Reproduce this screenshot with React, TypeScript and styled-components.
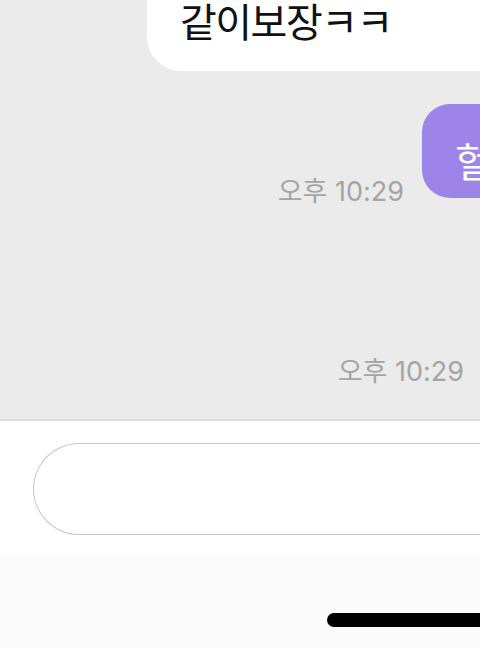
import React from "react";
import styled, { createGlobalStyle } from "styled-components";

const Global = createGlobalStyle`
  html, body { margin: 0; padding: 0; }
  body {
    width: 480px;
    height: 648px;
    overflow: hidden;
    background: #ffffff;
    font-family: Inter, "Noto Sans CJK KR", sans-serif;
  }
`;

const Screen = styled.div`
  width: 480px;
  height: 648px;
  display: flex;
  flex-direction: column;
  overflow: hidden;
`;

const ChatArea = styled.div`
  flex: 0 0 421px;
  box-sizing: border-box;
  background: #ebebeb;
  border-bottom: 2px solid #dcdcdc;
  overflow: hidden;
  display: flex;
  flex-direction: column;
`;

const Row = styled.div<{ $top: number }>`
  display: flex;
  justify-content: flex-end;
  align-items: flex-end;
  gap: 18px;
  margin-top: ${(p) => p.$top}px;
`;

const IncomingBubble = styled.div`
  flex: 1;
  margin-left: 147px;
  height: 71px;
  box-sizing: border-box;
  padding-left: 33px;
  background: #ffffff;
  border-bottom-left-radius: 34px;
  color: #111111;
  font-family: "Noto Sans CJK KR", sans-serif;
  font-size: 40px;
  line-height: 40px;
  letter-spacing: -1.5px;
  white-space: nowrap;
`;

const OutgoingBubble = styled.div`
  flex: 0 0 58px;
  height: 94px;
  box-sizing: border-box;
  padding: 36px 0 0 33px;
  background: #9c84e8;
  border-radius: 28px 0 0 28px;
  color: #ffffff;
  font-family: "Noto Sans CJK KR", sans-serif;
  font-size: 40px;
  line-height: 40px;
  white-space: nowrap;
  overflow: hidden;
`;

const Time = styled.span<{ $drop?: number; $right?: number }>`
  color: #a4a4a4;
  font-size: 27px;
  line-height: 32px;
  white-space: nowrap;
  margin-bottom: ${(p) => -(p.$drop ?? 0)}px;
  margin-right: ${(p) => p.$right ?? 0}px;
`;

const Composer = styled.div`
  flex: 0 0 133px;
  background: #ffffff;
  display: flex;
  align-items: flex-start;
  padding: 22px 0 0 33px;
  box-sizing: border-box;
`;

const InputPill = styled.div`
  flex: 1;
  height: 92px;
  box-sizing: border-box;
  border: 1.5px solid #c6c6c6;
  border-right: none;
  border-radius: 46px 0 0 46px;
  margin-right: -10px;
  background: #ffffff;
`;

const HomeArea = styled.div`
  flex: 1;
  background: #fbfbfb;
  display: flex;
  justify-content: flex-end;
  padding-top: 59px;
  box-sizing: border-box;
`;

const HomeBar = styled.div`
  width: 170px;
  height: 14px;
  margin-right: -17px;
  border-radius: 7px;
  background: #000000;
`;

export default function App() {
  return (
    <Screen>
      <Global />
      <ChatArea>
        <Row $top={0}>
          <IncomingBubble>같이보장ㅋㅋ</IncomingBubble>
        </Row>
        <Row $top={33}>
          <Time $drop={10}>오후 10:29</Time>
          <OutgoingBubble>헐</OutgoingBubble>
        </Row>
        <Row $top={158}>
          <Time $right={16}>오후 10:29</Time>
        </Row>
      </ChatArea>
      <Composer>
        <InputPill />
      </Composer>
      <HomeArea>
        <HomeBar />
      </HomeArea>
    </Screen>
  );
}
